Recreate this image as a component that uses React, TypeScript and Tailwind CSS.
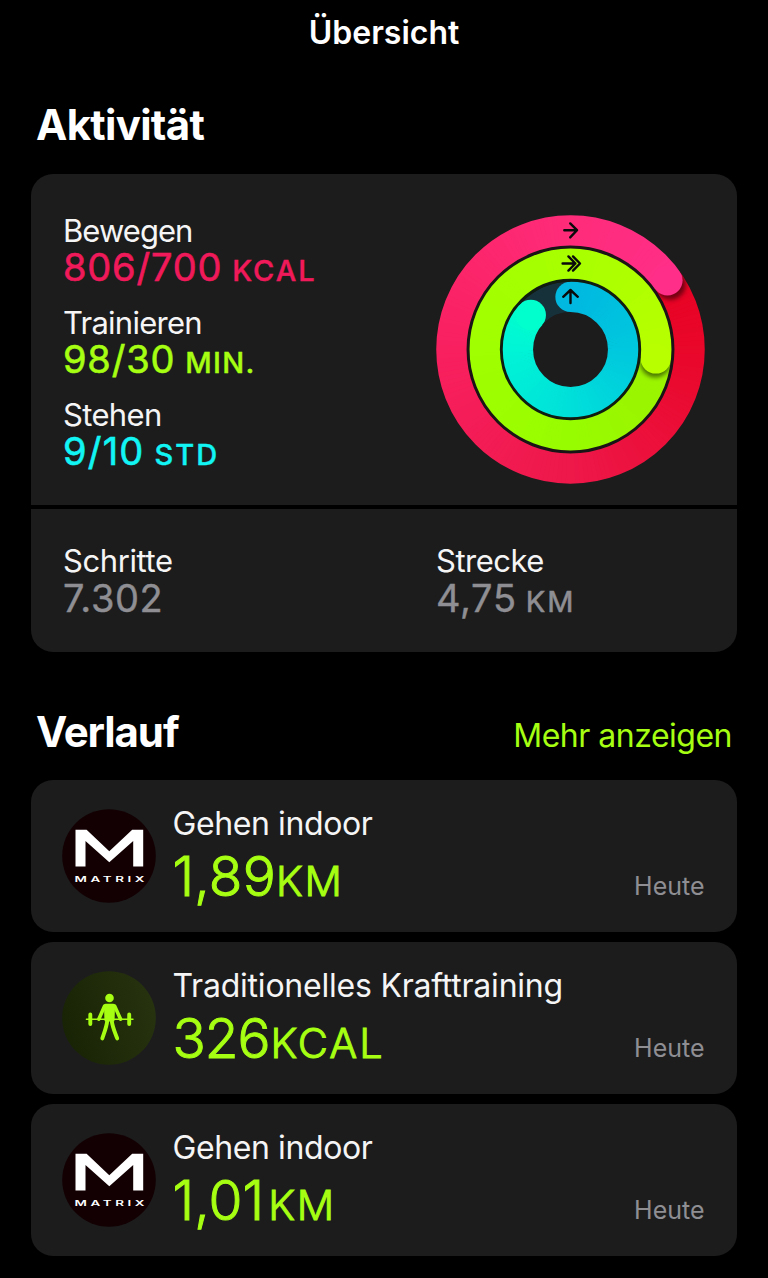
import React from "react";

type RGB = [number, number, number];
type Stop = [number, RGB];

const CX = 134.5;

function colorAt(stops: Stop[], angle: number): string {
  let i = 0;
  while (i < stops.length - 2 && angle > stops[i + 1][0]) i++;
  const [a0, c0] = stops[i];
  const [a1, c1] = stops[i + 1];
  const t = Math.min(1, Math.max(0, (angle - a0) / (a1 - a0)));
  const c = c0.map((v, k) => Math.round(v + (c1[k] - v) * t));
  return `rgb(${c[0]},${c[1]},${c[2]})`;
}

function point(r: number, angle: number): [number, number] {
  const a = (angle * Math.PI) / 180;
  return [CX + r * Math.sin(a), CX - r * Math.cos(a)];
}

interface RingProps {
  id: string;
  radius: number;
  from: number;
  to: number;
  stops: Stop[];
  track: string;
}

const WIDTH = 30.3;

function Ring({ id, radius, from, to, stops, track }: RingProps) {
  const step = 2;
  const segments: React.ReactNode[] = [];
  for (let a = from; a < to; a += step) {
    const end = Math.min(to, a + step + 1);
    const [x0, y0] = point(radius, a);
    const [x1, y1] = point(radius, end);
    segments.push(
      <path
        key={a}
        d={`M${x0} ${y0}A${radius} ${radius} 0 0 1 ${x1} ${y1}`}
        stroke={colorAt(stops, a)}
        strokeWidth={WIDTH + 2}
        fill="none"
      />
    );
  }
  const [sx, sy] = point(radius, from);
  const [ex, ey] = point(radius, to);
  const [hx, hy] = point(radius, to + 2.5);
  const overlaps = to - from >= 350;
  return (
    <g>
      <mask id={`${id}-band`} maskUnits="userSpaceOnUse" x="0" y="0" width="269" height="269">
        <circle cx={CX} cy={CX} r={radius} stroke="white" strokeWidth={WIDTH} fill="none" />
      </mask>
      <g mask={`url(#${id}-band)`}>
        <circle cx={CX} cy={CX} r={radius} stroke={track} strokeWidth={WIDTH} fill="none" />
        {!overlaps && <circle cx={sx} cy={sy} r={WIDTH / 2} fill={colorAt(stops, from)} />}
        {segments}
        {overlaps && (
          <>
            <circle cx={hx} cy={hy} r={WIDTH / 2} fill="black" opacity="0.5" filter="url(#soft)" />
            {segments.slice(-16)}
          </>
        )}
        <circle cx={ex} cy={ey} r={WIDTH / 2} fill={colorAt(stops, to)} />
      </g>
    </g>
  );
}

function ActivityRings() {
  return (
    <svg width="269" height="269" viewBox="0 0 269 269" className="shrink-0">
      <defs>
        <filter id="soft" x="-50%" y="-50%" width="200%" height="200%">
          <feGaussianBlur stdDeviation="2" />
        </filter>
      </defs>
      <circle cx={CX} cy={CX} r="102.3" stroke="#1b1416" strokeWidth="4" fill="none" />
      <circle cx={CX} cy={CX} r="69.3" stroke="#101c10" strokeWidth="4" fill="none" />
      <Ring
        id="move"
        radius={119.1}
        from={40}
        to={414.5}
        track="#2a0d15"
        stops={[
          [40, [230, 0, 32]],
          [90, [233, 7, 42]],
          [180, [238, 24, 74]],
          [270, [249, 32, 96]],
          [360, [255, 44, 122]],
          [415, [255, 46, 136]],
        ]}
      />
      <Ring
        id="train"
        radius={85.8}
        from={80}
        to={456}
        track="#1a2a08"
        stops={[
          [80, [156, 240, 0]],
          [180, [152, 252, 0]],
          [270, [160, 255, 0]],
          [360, [168, 255, 0]],
          [456, [184, 255, 0]],
        ]}
      />
      <Ring
        id="stand"
        radius={52.6}
        from={0}
        to={311}
        track="#17313a"
        stops={[
          [0, [0, 184, 224]],
          [90, [0, 200, 222]],
          [180, [0, 224, 218]],
          [270, [0, 244, 214]],
          [311, [0, 255, 204]],
        ]}
      />
      <g stroke="#0a0a0a" strokeWidth="2.4" fill="none" strokeLinecap="round" strokeLinejoin="round">
        <path d="M128.3 15.2H141M134.2 8.4L141 15.2L134.2 22.4" />
        <path d="M126.6 48.5H139.4M132.4 41.4L139.4 48.5L132.4 55.6M137 41.4L144 48.5L137 55.6" />
        <path d="M134.5 88V75.4M127.2 81.8L134.5 75L141.8 81.8" />
      </g>
    </svg>
  );
}

interface MetricProps {
  label: string;
  labelClass: string;
  value: string;
  valueClass?: string;
  unit?: string;
  unitClass?: string;
  color: string;
}

function Metric({ label, labelClass, value, valueClass = "", unit, unitClass = "", color }: MetricProps) {
  return (
    <div className="h-[74px] whitespace-nowrap">
      <div className={`h-9 text-[31px] leading-9 text-[#f5f5f5] ${labelClass}`}>{label}</div>
      <div className={`h-[38px] text-[38px] leading-[38px] [stroke-linejoin:round] ${color}`}>
        <span className={valueClass}>{value}</span>
        {unit && <span className={`text-[29px] ${unitClass}`}>{unit}</span>}
      </div>
    </div>
  );
}

function MatrixLogo() {
  return (
    <svg width="94" height="94" viewBox="0 0 94 94" className="shrink-0">
      <circle cx="47" cy="47" r="46.8" fill="#130003" />
      <path d="M13.5 57.6V20.8H24.6L47.3 42.2L70.2 20.8H81.2V57.6H71.2V32L47.3 53.2L23.5 32V57.6Z" fill="white" />
      <g transform="translate(12.6 73.2) scale(1.72 1)">
        <text textLength="40.6" lengthAdjust="spacing" fontSize="7.8" fontWeight="600" fill="white">
          MATRIX
        </text>
      </g>
    </svg>
  );
}

function StrengthIcon() {
  return (
    <svg width="94" height="94" viewBox="0 0 94 94" className="shrink-0">
      <defs>
        <linearGradient id="badge" x1="0" y1="0.65" x2="1" y2="0.35">
          <stop offset="0" stopColor="#172304" />
          <stop offset="1" stopColor="#27330f" />
        </linearGradient>
      </defs>
      <circle cx="47" cy="47" r="46.8" fill="url(#badge)" />
      <g fill="#a6ff12" stroke="#a6ff12" strokeLinecap="round" strokeLinejoin="round">
        <circle cx="47.5" cy="27" r="4.3" stroke="none" />
        <path d="M24.4 48.2H71" strokeWidth="1.4" />
        <path d="M28.3 43.4V53M67.2 43.4V53" strokeWidth="3.9" />
        <path d="M43.6 34.4H51.4L51 49H44Z" strokeWidth="3.2" />
        <path d="M42.6 35L36.8 48.2M52.6 35L58.6 48.2" strokeWidth="3.6" fill="none" />
        <path d="M45.2 50C44.6 56 42.4 61 40.3 67.4M49.8 50C50.4 56 52.8 61 55.2 67.4" strokeWidth="3.9" fill="none" />
      </g>
    </svg>
  );
}

interface WorkoutProps {
  icon: React.ReactNode;
  title: string;
  titleClass: string;
  value: string;
  valueClass: string;
  unit: string;
  unitClass: string;
}

function Workout({ icon, title, titleClass, value, valueClass, unit, unitClass }: WorkoutProps) {
  return (
    <article className="flex h-[152px] rounded-[22px] bg-[#1c1c1d] pt-[29px] pr-[32.5px] pl-[31px]">
      {icon}
      <div className="ml-[16.5px] flex-1 whitespace-nowrap">
        <div className={`-mt-[5px] h-10 text-[32px] leading-10 text-[#f5f5f5] ${titleClass}`}>{title}</div>
        <div className="h-[64px] text-[55px] leading-[64px] font-light text-[#a6ff12] [stroke-linejoin:round] [-webkit-text-stroke:1px_currentColor]">
          <span className={valueClass}>{value}</span>
          <span className={`text-[41.5px] ${unitClass}`}>{unit}</span>
        </div>
      </div>
      <div className="mt-[62px] text-[25px] leading-[30px] text-[#8e8e93]">Heute</div>
    </article>
  );
}

export default function App() {
  return (
    <main className="h-[1278px] w-[768px] overflow-hidden bg-black pr-[31px] pl-[31px] pt-[13px] font-[Inter,sans-serif] text-white">
      <header className="h-10 text-center text-[32px] leading-10 font-semibold">Übersicht</header>
      <h1 className="mt-[47px] ml-[5px] h-[50px] text-[42px] leading-[50px] font-bold tracking-[-0.7px]">Aktivität</h1>

      <section className="mt-6 overflow-hidden rounded-[22px]">
        <div className="flex h-[331px] justify-between bg-[#1c1c1d] pr-[32px] pl-8">
          <div className="flex flex-col gap-[18px] pt-[38px]">
            <Metric
              label="Bewegen"
              labelClass="tracking-[-0.95px] pt-px"
              value="806/700"
              valueClass="tracking-[0.8px] mr-[10px] [-webkit-text-stroke:0.6px_currentColor]"
              unit="KCAL"
              unitClass="font-medium tracking-[2px] [-webkit-text-stroke:0.4px_currentColor]"
              color="text-[#f0195a]"
            />
            <Metric
              label="Trainieren"
              labelClass="tracking-[-0.75px] pt-px"
              value="98/30"
              valueClass="tracking-[0.8px] mr-[10px] [-webkit-text-stroke:0.6px_currentColor]"
              unit="MIN."
              unitClass="font-medium tracking-[1.3px] [-webkit-text-stroke:0.4px_currentColor]"
              color="text-[#a6ff12]"
            />
            <Metric
              label="Stehen"
              labelClass="tracking-[-0.65px] pt-px"
              value="9/10"
              valueClass="tracking-[1.2px] mr-[10px] [-webkit-text-stroke:0.6px_currentColor]"
              unit="STD"
              unitClass="font-medium tracking-[2px] [-webkit-text-stroke:0.4px_currentColor]"
              color="text-[#12f5f5]"
            />
          </div>
          <div className="pt-[41px]">
            <ActivityRings />
          </div>
        </div>
        <div className="mt-1 flex h-[143px] bg-[#1c1c1d] pt-[34px] pl-8">
          <div className="w-[373px]">
            <Metric
              label="Schritte"
              labelClass="tracking-[-0.4px]"
              value="7.302"
              valueClass="tracking-[0.6px] [-webkit-text-stroke:0.4px_currentColor]"
              color="text-[#8e8e93]"
            />
          </div>
          <Metric
            label="Strecke"
            labelClass="tracking-[-0.5px]"
            value="4,75"
            valueClass="tracking-[0.7px] mr-[9px] [-webkit-text-stroke:0.4px_currentColor]"
            unit="KM"
            unitClass="tracking-[2px] [-webkit-text-stroke:0.6px_currentColor]"
            color="text-[#8e8e93]"
          />
        </div>
      </section>

      <div className="mt-[55px] flex h-[50px] items-start justify-between pr-[5px] pl-[5px]">
        <h2 className="text-[42px] leading-[50px] font-bold tracking-[-1.1px]">Verlauf</h2>
        <a className="mt-[9px] text-[32px] leading-10 tracking-[-0.5px] text-[#a6ff12]">Mehr anzeigen</a>
      </div>

      <div className="mt-[23px] flex flex-col gap-[10px]">
        <Workout
          icon={<MatrixLogo />}
          title="Gehen indoor"
          titleClass="tracking-[-0.4px]"
          value="1,89"
          valueClass="tracking-[0.2px]"
          unit="KM"
          unitClass="tracking-[1.8px]"
        />
        <Workout
          icon={<StrengthIcon />}
          title="Traditionelles Krafttraining"
          titleClass="tracking-[-0.22px]"
          value="326"
          valueClass="tracking-[-1.1px] mr-px"
          unit="KCAL"
          unitClass="tracking-[2px]"
        />
        <Workout
          icon={<MatrixLogo />}
          title="Gehen indoor"
          titleClass="tracking-[-0.4px]"
          value="1,01"
          valueClass="tracking-[0.1px] mr-[4px]"
          unit="KM"
          unitClass="tracking-[1.5px]"
        />
      </div>
    </main>
  );
}
